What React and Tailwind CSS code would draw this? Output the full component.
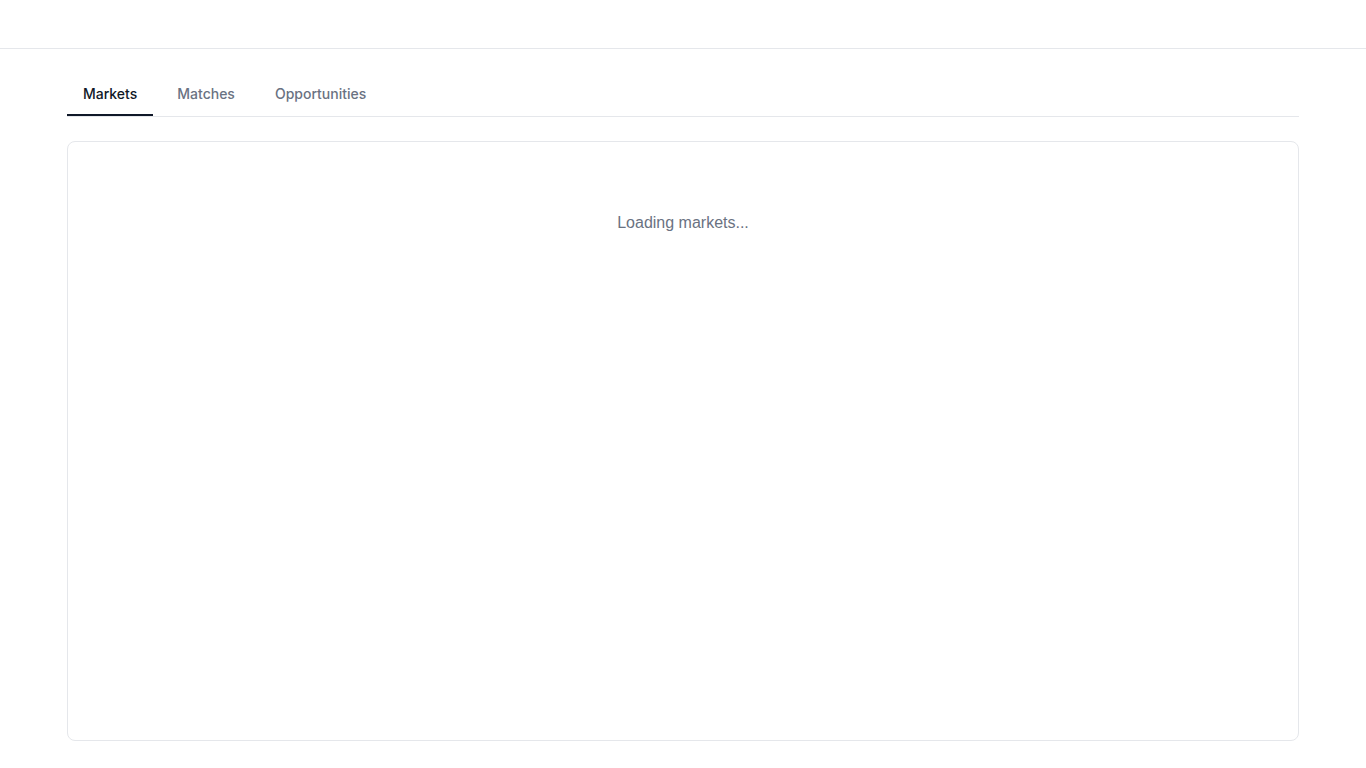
import { useState } from "react";

const tabs = ["Markets", "Matches", "Opportunities"];

export default function App() {
  const [active, setActive] = useState("Markets");

  return (
    <div className="min-h-screen bg-white font-['Inter',sans-serif] text-gray-900">
      <header className="h-[49px] border-b border-gray-200 bg-white" />
      <main className="mx-auto w-full max-w-7xl px-6 pt-[23px]">
        <nav className="flex gap-2 border-b border-gray-200">
          {tabs.map((tab) => {
            const isActive = tab === active;
            return (
              <button
                key={tab}
                type="button"
                onClick={() => setActive(tab)}
                className={`border-b-2 px-4 pt-3 pb-2.5 text-sm font-medium leading-5 ${
                  isActive
                    ? "border-gray-900 text-gray-900"
                    : "border-transparent text-gray-500 hover:text-gray-700"
                }`}
              >
                {tab}
              </button>
            );
          })}
        </nav>
        <section className="mt-6 h-[600px] rounded-lg border border-gray-200 bg-white px-6 pt-[69px]">
          <p className="text-center font-['Liberation_Sans',Arial,sans-serif] text-base leading-6 text-gray-500">
            Loading markets...
          </p>
        </section>
      </main>
    </div>
  );
}
